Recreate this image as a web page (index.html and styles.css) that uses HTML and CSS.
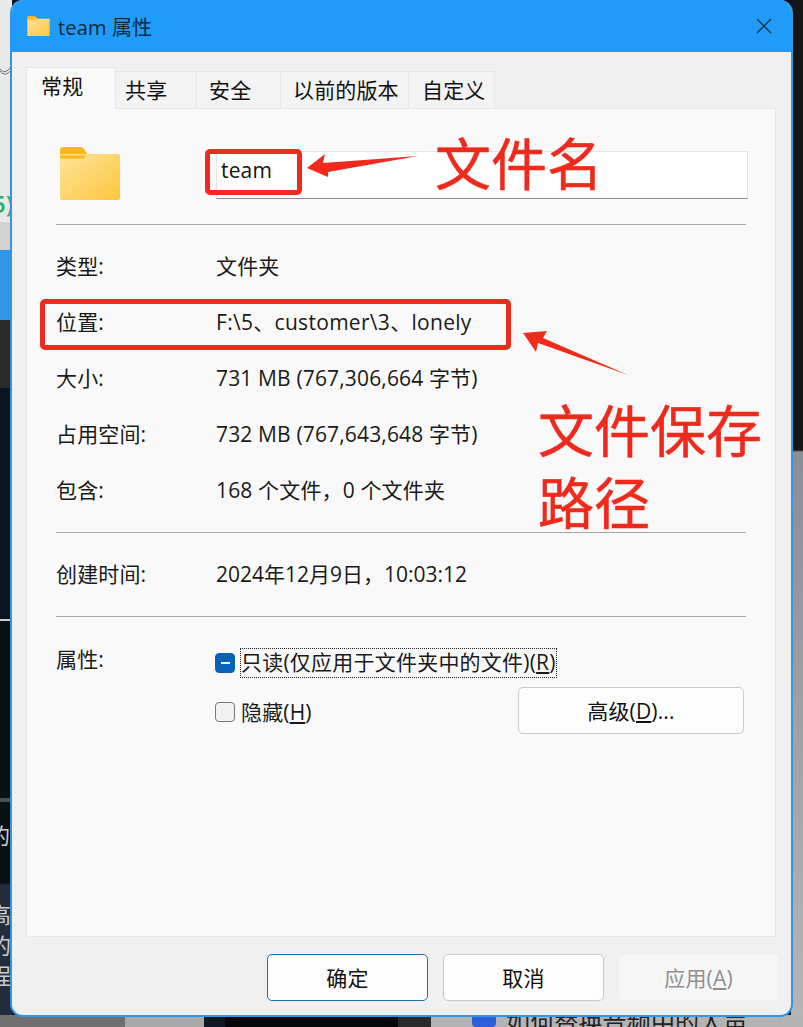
FILE: index.html
```html
<!DOCTYPE html>
<html lang="zh">
<head>
<meta charset="utf-8">
<title>team 属性</title>
<link rel="stylesheet" href="styles.css">
</head>
<body>
<div class="desktop">
  <div class="bg-left"></div>
  <div class="bg-right"></div>
  <div class="bg-bottom"></div>
  <svg class="bg-curve" viewBox="0 0 12 20"><path d="M0 9C3 13 6 13 12 6M0 11C4 16 7 15 12 9" stroke="#666" stroke-width="1" fill="none"/></svg>
  <span class="bg-text green">5)</span>
  <span class="bg-text t1">的</span>
  <span class="bg-text t2">高</span>
  <span class="bg-text t3">的</span>
  <span class="bg-text t4">程</span>
  <span class="bg-chip"></span>
  <span class="bg-caption">如何替换音频中的人声</span>

  <div class="window">
    <header class="titlebar">
      <svg class="title-icon" viewBox="0 0 60 53"><use href="#folder"/></svg>
      <span class="title-text">team 属性</span>
      <svg class="close" viewBox="0 0 16 16"><path d="M1 1L15 15M15 1L1 15" stroke="#16324c" stroke-width="1.3" fill="none"/></svg>
    </header>

    <nav class="tabs">
      <span class="tab active w1">常规</span>
      <span class="tab w2">共享</span>
      <span class="tab w3">安全</span>
      <span class="tab w4">以前的版本</span>
      <span class="tab w5">自定义</span>
    </nav>

    <main class="panel">
      <div class="head">
        <svg class="big-folder" viewBox="0 0 60 53">
          <defs>
            <linearGradient id="fg" x1="0" y1="0" x2="1" y2="1">
              <stop offset="0" stop-color="#ffe39a"/>
              <stop offset="1" stop-color="#fcc63f"/>
            </linearGradient>
            <symbol id="folder" viewBox="0 0 60 53">
              <path d="M0 3a3 3 0 0 1 3-3h17c3 0 4 2 6 5l2 3H0z" fill="#fdb61d"/>
              <path d="M0 9a2 2 0 0 1 2-2h56a2 2 0 0 1 2 2v42a2 2 0 0 1-2 2H2a2 2 0 0 1-2-2z" fill="url(#fg)"/>
              <path d="M0 8.500h26l-2.500 3H0z" fill="#fdb61d"/>
            </symbol>
          </defs>
          <use href="#folder"/>
        </svg>
        <div class="name-input">team</div>
      </div>
      <hr class="sep first">
      <div class="row"><span>类型:</span><span>文件夹</span></div>
      <div class="row"><span>位置:</span><span class="wide">F:\5、customer\3、lonely</span></div>
      <div class="row"><span>大小:</span><span>731 MB (767,306,664 字节)</span></div>
      <div class="row"><span>占用空间:</span><span>732 MB (767,643,648 字节)</span></div>
      <div class="row"><span>包含:</span><span>168 个文件，0 个文件夹</span></div>
      <hr class="sep">
      <div class="row"><span>创建时间:</span><span class="narrow">2024年12月9日，10:03:12</span></div>
      <hr class="sep">
      <div class="attrs">
        <span class="attr-label">属性:</span>
        <div class="attr-body">
          <div class="check-row">
            <span class="box on"><i></i></span>
            <span class="focus">只读(仅应用于文件夹中的文件)(<u>R</u>)</span>
          </div>
          <div class="check-row second">
            <span class="box"></span>
            <span class="plain">隐藏(<u>H</u>)</span>
            <button class="btn adv">高级(<u>D</u>)...</button>
          </div>
        </div>
      </div>
    </main>

    <footer class="footer">
      <button class="btn primary">确定</button>
      <button class="btn">取消</button>
      <button class="btn off">应用(<u>A</u>)</button>
    </footer>
  </div>

  <div class="mark box-name"></div>
  <div class="mark box-path"></div>
  <svg class="arrows" viewBox="0 0 803 1027">
    <path d="M307 168L325 154L323 163L418 156L328 172L328 177z" fill="#f02a1c"/>
    <path d="M523 333L547 331L543 338L628 375L538 343L536 352z" fill="#f02a1c"/>
  </svg>
  <span class="note n1">文件名</span>
  <span class="note n2">文件保存<br>路径</span>
</div>
</body>
</html>
```
FILE: styles.css
```css
* { box-sizing: border-box; }
html, body { margin: 0; padding: 0; }
body { background: #0d1622; }
.desktop {
  position: relative;
  width: 803px;
  height: 1027px;
  overflow: hidden;
  font-family: "Open Sans", "Noto Sans CJK SC", sans-serif;
  font-size: 21px;
  letter-spacing: 0.15px;
  color: #1a1a1a;
  padding: 0 10px;
}
.bg-left {
  position: absolute; left: 0; top: 0; width: 12px; height: 1027px;
  background: linear-gradient(#e9e9e9 0, #e9e9e9 222px, #d2d2d2 222px, #d2d2d2 250px, #2f97e6 250px, #2f97e6 320px, #2b2a2b 320px, #2b2a2b 388px, #0c1420 388px, #0c1420 619px, #c9ccd0 619px, #c9ccd0 621px, #0a0f18 621px, #0a0f18 798px, #4a4d52 798px, #4a4d52 802px, #0a0f18 802px, #0a0f18 883px, #232c3a 885px, #232c3a 1017px);
}
.bg-curve { position: absolute; left: 0; top: 60px; width: 12px; height: 20px; }
.bg-right {
  position: absolute; right: 0; top: 0; width: 12px; height: 1027px;
  background: linear-gradient(#161616 0, #161616 450px, #8a8f95 452px, #b5b5b5 1027px);
}
.bg-bottom {
  position: absolute; left: 0; bottom: 0; width: 803px; height: 12px;
  background: linear-gradient(90deg, #6f6f6f 0, #6f6f6f 125px, #a9a9a9 125px, #a9a9a9 204px, #0e1a2a 204px, #0e1a2a 225px, #05060a 225px, #05060a 398px, #2a2a2a 398px, #2a2a2a 431px, #b3b3b3 431px, #b3b3b3 803px);
}
.bg-text { position: absolute; font-size: 22px; line-height: 26px; color: #ccc; left: -11px; }
.green { color: #23b36b; top: 191px; left: -8px; font-size: 24px; font-weight: 600; }
.t1 { top: 822px; left: -12px; }
.t2 { top: 901px; }
.t3 { top: 932px; }
.t4 { top: 962px; }
.bg-chip { position: absolute; left: 472px; top: 1008px; width: 24px; height: 19px; border-radius: 4px; background: #2f5fd8; }
.bg-caption { position: absolute; left: 506px; top: 1006px; font-size: 24px; line-height: 32px; color: #222; }

.window {
  position: relative;
  width: 783px;
  height: 1017px;
  background: #f0f0f0;
  border: 2px solid #2f97e6;
  border-top: 0;
  border-radius: 13px;
  overflow: hidden;
}
.titlebar {
  display: flex;
  align-items: center;
  height: 52px;
  margin: 0 -2px;
  padding: 0 21px 0 16px;
  background: #209cf8;
  color: #10293f;
  font-size: 20px;
}
.title-icon { width: 25px; height: 20px; margin-right: 7px; }
.title-text { flex: 1; }
.close { width: 16px; height: 16px; }

.tabs { display: flex; align-items: flex-end; height: 56px; padding: 15px 0 0 14px; }
.tab {
  height: 37px;
  display: flex; align-items: center;
  background: #f3f3f3;
  border: 1px solid #e6e6e6;
  border-bottom: 0;
  border-left: 0;
  color: #111;
  line-height: 1;
}
.tab.active {
  position: relative;
  z-index: 1;
  height: 42px;
  margin-bottom: -1px;
  background: #f9f9f9;
  padding-bottom: 4px;
  border-left: 1px solid #e6e6e6;
}
.w1 { width: 90px; padding-left: 14px; }
.w2 { width: 81px; padding-left: 9px; }
.w3 { width: 84px; padding-left: 12px; }
.w4 { width: 128px; padding-left: 12px; }
.w5 { width: 86px; padding-left: 13px; }

.panel {
  width: 750px;
  height: 829px;
  margin-left: 14px;
  padding: 42px 29px 0;
  background: #f9f9f9;
  border: 1px solid #e6e6e6;
}
.head { display: grid; grid-template-columns: 160px 532px; }
.big-folder { width: 60px; height: 53px; margin: -4px 0 0 4px; }
.name-input {
  height: 48px;
  padding: 6px 0 0 4px;
  background: #fff;
  border: 1px solid #e6e6e6;
  border-bottom: 1px solid #8a8a8a;
  color: #111;
  line-height: 24px;
}
.sep { height: 1px; margin: 13px 0 14px; border: 0; background: #a5a5a5; width: 690px; }
.sep.first { margin-top: 24px; }
.row { display: grid; grid-template-columns: 160px 1fr; height: 56px; padding-bottom: 4px; align-items: center; }
.wide { letter-spacing: 0.3px; }
.narrow { letter-spacing: 0; }
.attrs { display: grid; grid-template-columns: 160px 528px; margin-top: 31px; }
.attr-label { line-height: 28px; margin-top: -3px; }
.check-row { display: flex; align-items: center; height: 30px; margin-left: -1px; }
.check-row.second { height: 47px; margin-top: 9px; }
.box {
  width: 20px; height: 20px; margin-right: 5px;
  border: 1px solid #767676; border-radius: 4px; background: #f2f2f2;
  display: flex; align-items: center; justify-content: center;
}
.second .box { margin-top: 3px; }
.box.on { background: #0562b7; border-color: #0562b7; }
.box i { width: 9px; height: 2px; background: #fff; display: block; }
.focus { height: 30px; line-height: 28px; outline: 1px dotted #222; outline-offset: -1px; padding: 0 1px; white-space: nowrap; letter-spacing: 0.22px; }
.plain { flex: 1; margin-left: 1px; padding-top: 1px; }

.btn {
  font: inherit;
  letter-spacing: inherit;
  color: #111;
  width: 161px;
  height: 47px;
  background: #fdfdfd;
  border: 1px solid #c9c9c9;
  border-radius: 5px;
  padding: 0 0 2px;
}
.adv { width: 226px; }
.footer { display: flex; gap: 15px; padding: 17px 0 0 255px; }
.primary { border-color: #1a6fa8; }
.off { background: #f6f6f6; border-color: #efefef; color: #8f8f8f; margin-left: -1px; }

.mark { position: absolute; border: 5px solid #f02a1c; border-radius: 5px; }
.box-name { left: 205px; top: 149px; width: 97px; height: 46px; }
.box-path { left: 40px; top: 299px; width: 471px; height: 51px; }
.arrows { position: absolute; left: 0; top: 0; width: 803px; height: 1027px; }
.note { position: absolute; color: #ee2a1c; font-size: 56px; line-height: 72px; letter-spacing: 0; font-family: "Noto Sans CJK SC", sans-serif; -webkit-text-stroke: 0.5px #ee2a1c; }
.n1 { left: 435px; top: 125px; }
.n2 { left: 538px; top: 392px; }
```
